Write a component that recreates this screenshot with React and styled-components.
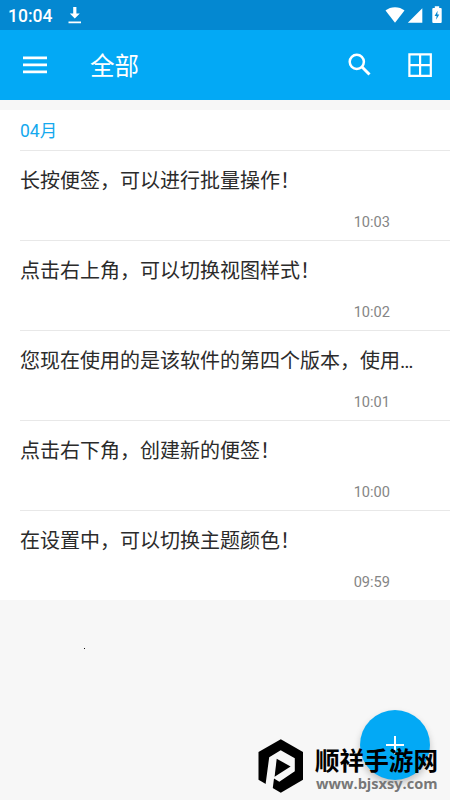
import styled, { createGlobalStyle } from "styled-components";

const notes = [
  { text: "长按便签，可以进行批量操作！", time: "10:03" },
  { text: "点击右上角，可以切换视图样式！", time: "10:02" },
  { text: "您现在使用的是该软件的第四个版本，使用…", time: "10:01" },
  { text: "点击右下角，创建新的便签！", time: "10:00" },
  { text: "在设置中，可以切换主题颜色！", time: "09:59" },
];

export default function App() {
  return (
    <Screen>
      <GlobalStyle />
      <StatusBar>
        <Clock>10:04</Clock>
        <svg width="14" height="18" viewBox="0 0 14 18" fill="#fff">
          <path d="M5.2 1h3.2v6.5h3.4L6.8 12.5 1.8 7.5h3.4zM0.5 15.6h12.5v1.7H0.5z" />
        </svg>
        <StatusIcons>
          <svg width="48" height="18" viewBox="0 0 48 18" fill="#fff">
            <path d="M0.5 4.6C5.5 0 14.5 0 19.5 4.6L10 16.8z" />
            <path d="M37.3 2.3v14.5H22.8z" />
          </svg>
          <BatteryIcon width="10" height="18" viewBox="0 0 10 18" fill="#fff">
            <path d="M2.8 0.2h4.4v1.8h1.5q1 0 1 1v13q0 1-1 1H1.3q-1 0-1-1V3q0-1 1-1h1.5z" />
            <path d="M5.6 4.8 2.6 10h2l-.5 3.8L7.3 8.5h-2z" fill="#0488d1" />
          </BatteryIcon>
        </StatusIcons>
      </StatusBar>
      <Toolbar>
        <svg width="24" height="18" viewBox="0 0 24 18" fill="#fff">
          <path d="M0 0.6h24v2.6H0zM0 7.6h24v2.6H0zM0 14.6h24v2.6H0z" />
        </svg>
        <Title>全部</Title>
        <svg width="24" height="24" viewBox="0 0 24 24" fill="none" stroke="#fff">
          <circle cx="8.8" cy="8.8" r="7.1" strokeWidth="2.5" />
          <path d="M13.8 13.8 21.5 21.5" strokeWidth="3" />
        </svg>
        <GridIcon width="24" height="24" viewBox="0 0 24 24" fill="none" stroke="#fff">
          <path d="M1.4 1.4h21.4v21.4H1.4zM12.1 1v22M1 12.1h22" strokeWidth="2.2" />
        </GridIcon>
      </Toolbar>
      <List>
        <Month>04月</Month>
        {notes.map((note) => (
          <Note key={note.time}>
            <NoteText>{note.text}</NoteText>
            <Time>{note.time}</Time>
          </Note>
        ))}
      </List>
      <Speck />
      <AddButton>
        <svg width="18" height="18" viewBox="0 0 18 18" stroke="#fff" strokeWidth="2">
          <path d="M9 0v18M0 9h18" />
        </svg>
      </AddButton>
      <Watermark>
        <svg width="46" height="56" viewBox="0 0 46 56">
          <path d="M22.8 1.2 45 14v27.8L22.8 54.8 .5 41.8V14z" />
          <path
            d="M7.4 47.5 11.2 19.2 22.7 12.2 36.8 20.3v13L21.3 43.8 16 40.5 14 56z"
            fill="#f7f7f7"
          />
          <path d="M18.7 20.8 32.6 28.4 16.6 38.8z" />
        </svg>
        <Brand>
          <BrandName>顺祥手游网</BrandName>
          <BrandUrl>www.bjsxsy.com</BrandUrl>
        </Brand>
      </Watermark>
    </Screen>
  );
}

const GlobalStyle = createGlobalStyle`
  body {
    margin: 0;
    background: #f7f7f7;
  }
`;
const Screen = styled.div`
  position: relative;
  width: 450px;
  height: 800px;
  overflow: hidden;
  background: #f7f7f7;
  font-family: Roboto, "Noto Sans CJK SC", sans-serif;
`;
const StatusBar = styled.div`
  display: flex;
  align-items: flex-start;
  box-sizing: border-box;
  height: 30px;
  padding: 6px 8px 0;
  background: #0488d1;
  color: #fff;
`;
const Clock = styled.span`
  width: 60px;
  font-size: 17.5px;
  font-weight: 500;
  line-height: 20px;
`;
const StatusIcons = styled.div`
  display: flex;
  margin-left: auto;
`;
const BatteryIcon = styled.svg`
  margin-left: -1px;
`;
const Toolbar = styled.div`
  display: flex;
  align-items: center;
  box-sizing: border-box;
  height: 70px;
  padding: 0 18px 0 23px;
  background: #03a9f5;
`;
const Title = styled.h1`
  flex: 1;
  margin: 0 0 0 43px;
  padding-top: 4px;
  color: #fff;
  font-size: 24.5px;
  font-weight: 400;
  line-height: 36px;
`;
const GridIcon = styled.svg`
  margin-left: 36px;
`;
const List = styled.div`
  margin-top: 10px;
  padding-left: 20px;
  background: #fff;
`;
const Month = styled.div`
  height: 40px;
  color: #14a9ee;
  font-size: 17.5px;
  line-height: 42px;
`;
const Note = styled.div`
  display: flex;
  flex-direction: column;
  justify-content: space-between;
  box-sizing: border-box;
  height: 90px;
  padding: 15px 60px 9px 0;
  border-top: 1px solid #e8e8e8;
`;
const NoteText = styled.div`
  color: #2b2b2b;
  font-size: 20px;
  line-height: 30px;
  white-space: nowrap;
`;
const Time = styled.div`
  align-self: flex-end;
  color: #858585;
  font-size: 14.6px;
  line-height: 18px;
`;
const Speck = styled.div`
  width: 1px;
  height: 1px;
  margin: 48px 0 0 84px;
  background: #111;
`;
const AddButton = styled.div`
  position: absolute;
  top: 710px;
  left: 360px;
  display: flex;
  align-items: center;
  justify-content: center;
  width: 70px;
  height: 70px;
  border-radius: 50%;
  background: #03a9f5;
  box-shadow: 0 4px 7px rgba(0, 0, 0, 0.22);
`;
const Watermark = styled.div`
  position: absolute;
  top: 738px;
  left: 258px;
  display: flex;
`;
const Brand = styled.div`
  margin-left: 11px;
  padding-top: 12px;
  white-space: nowrap;
`;
const BrandName = styled.div`
  color: #000;
  font-size: 24.6px;
  font-weight: 700;
  line-height: 24px;
`;
const BrandUrl = styled.div`
  margin-left: 1px;
  color: #777;
  font-family: "Open Sans", sans-serif;
  font-size: 14.6px;
  font-weight: 700;
  line-height: 18px;
`;
